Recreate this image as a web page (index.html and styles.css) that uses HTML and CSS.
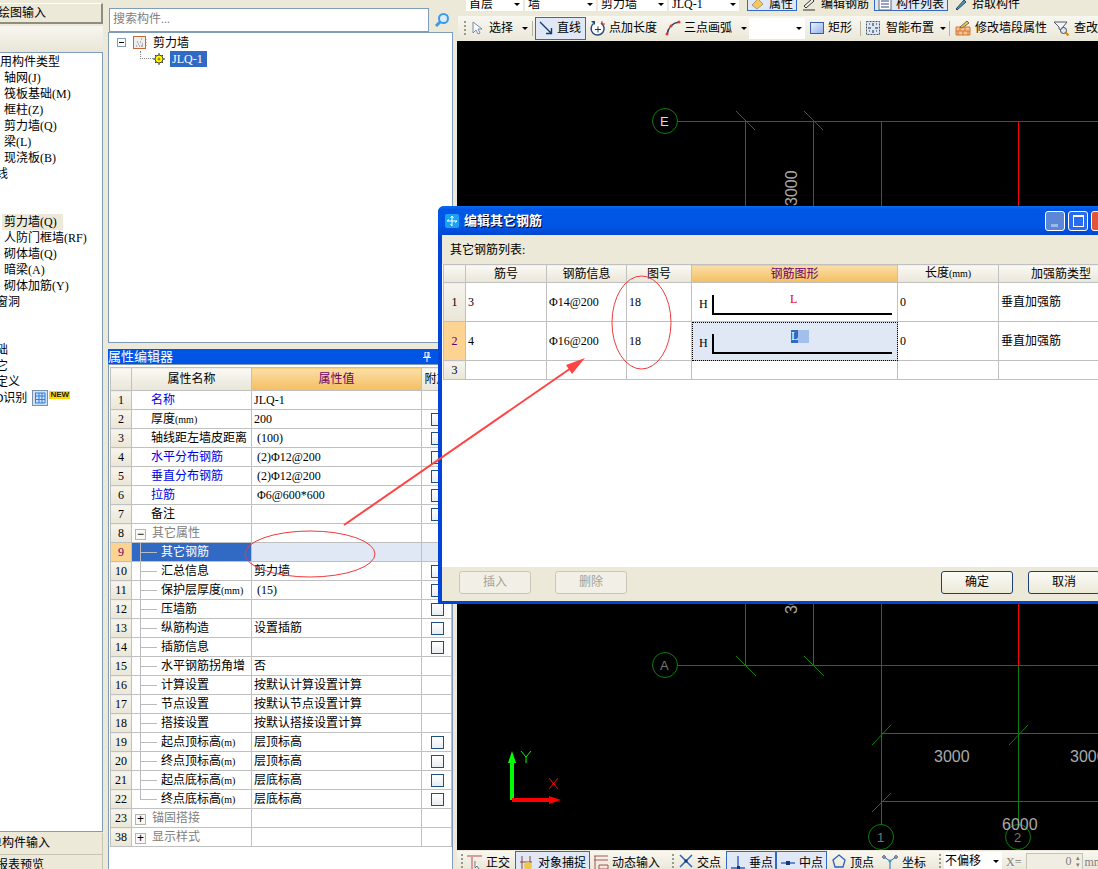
FILE: index.html
```html
<!DOCTYPE html>
<html lang="zh">
<head>
<meta charset="utf-8">
<title>编辑其它钢筋</title>
<link rel="stylesheet" href="styles.css">
</head>
<body>
<div class="app">
  <aside class="left">
    <div class="navbtn first"><span class="cut2">绘图输入</span></div>
    <div class="navblank"></div>
    <div class="navlist">
      <div class="li cut12">常用构件类型</div>
      <div class="li ind">轴网(J)</div>
      <div class="li ind">筏板基础(M)</div>
      <div class="li ind">框柱(Z)</div>
      <div class="li ind">剪力墙(Q)</div>
      <div class="li ind">梁(L)</div>
      <div class="li ind">现浇板(B)</div>
      <div class="li cut16">轴线</div>
      <div class="li"></div>
      <div class="li"></div>
      <div class="li ind"><span class="sel">剪力墙(Q)</span></div>
      <div class="li ind">人防门框墙(RF)</div>
      <div class="li ind">砌体墙(Q)</div>
      <div class="li ind">暗梁(A)</div>
      <div class="li ind">砌体加筋(Y)</div>
      <div class="li cut16">门窗洞</div>
      <div class="li"></div>
      <div class="li"></div>
      <div class="li cut16">基础</div>
      <div class="li cut16">其它</div>
      <div class="li cut16">自定义</div>
      <div class="li idrow">CAD识别
        <svg class="ic16 idicon" viewBox="0 0 16 16"><rect x="0.500" y="0.500" width="15" height="15" fill="#cfe2fa" stroke="#7f8fa8"/><path d="M3.500 3v10M7 3v10M10 3v10M13 3v10M3 3h10M3 6h10M3 9.500h10M3 13h10" stroke="#2f7fe0" fill="none"/></svg>
        <span class="newtag">NEW</span>
      </div>
    </div>
    <div class="navbtn bottom"><span class="cut10">单构件输入</span></div>
    <div class="navbtn last"><span class="cut4">报表预览</span></div>
  </aside>

  <section class="mid">
    <div class="searchrow">
      <div class="search">搜索构件...</div>
      <svg class="searchicon" viewBox="0 0 16 16"><circle cx="9.500" cy="6.500" r="4.500" fill="#d9ecfb" stroke="#3b9be6" stroke-width="2"/><path d="M6 10l-4 4" stroke="#3b9be6" stroke-width="3"/></svg>
    </div>
    <div class="tree">
      <div class="tnode">
        <span class="minus"></span>
        <svg class="ic14 tfolder" viewBox="0 0 14 14"><rect x="0.500" y="0.500" width="12" height="12" fill="#eee" stroke="#c5673a"/><path d="M3 10h1M5 8h1M7 6h1M4 6h1M8 10h2M6 10h1M9 8h1M8 3h1" stroke="#777"/><path d="M13 3v1M13 6v1M13 9v1" stroke="#e07020"/></svg>
        <span>剪力墙</span>
      </div>
      <div class="tnode child">
        <span class="dots"></span>
        <svg class="ic12" viewBox="0 0 12 12"><circle cx="6" cy="6" r="4" fill="#ff0" stroke="#444"/><circle cx="6" cy="6" r="1.500" fill="#a80"/><path d="M6 0v2M6 10v2M0 6h2M10 6h2M2 2l1 1M9 9l1 1M2 10l1-1M9 3l1-1" stroke="#333"/></svg>
        <span class="tsel">JLQ-1</span>
      </div>
    </div>
    <div class="ptitle"><span>属性编辑器</span><svg class="pin" viewBox="0 0 8 10"><path d="M2 0h4v5H2zM5 0v5M0 5.500h8M4 6v4" stroke="#fff" fill="none"/></svg></div>
    <div class="pbody">
      <table class="grid pgrid">
        <colgroup><col class="c1"><col class="c2"><col class="c3"><col class="c4"></colgroup>
        <tr class="head"><th></th><th>属性名称</th><th class="hot">属性值</th><th>附加</th></tr>
        <tr><td class="n">1</td><td class="nm blue">名称</td><td class="v">JLQ-1</td><td></td></tr>
        <tr><td class="n">2</td><td class="nm">厚度<span class="u">(mm)</span></td><td class="v">200</td><td class="k"><i class="cb"></i></td></tr>
        <tr><td class="n">3</td><td class="nm">轴线距左墙皮距离</td><td class="v p">(100)</td><td class="k"><i class="cb"></i></td></tr>
        <tr><td class="n">4</td><td class="nm blue">水平分布钢筋</td><td class="v p">(2)Φ12@200</td><td class="k"><i class="cb"></i></td></tr>
        <tr><td class="n">5</td><td class="nm blue">垂直分布钢筋</td><td class="v p">(2)Φ12@200</td><td class="k"><i class="cb"></i></td></tr>
        <tr><td class="n">6</td><td class="nm blue">拉筋</td><td class="v p">Φ6@600*600</td><td class="k"><i class="cb"></i></td></tr>
        <tr><td class="n">7</td><td class="nm">备注</td><td class="v"></td><td class="k"><i class="cb"></i></td></tr>
        <tr><td class="n">8</td><td class="gp"><span class="box">−</span>其它属性</td><td></td><td></td></tr>
        <tr class="cur"><td class="n">9</td><td class="sub">其它钢筋</td><td></td><td></td></tr>
        <tr><td class="n">10</td><td class="sub">汇总信息</td><td class="v">剪力墙</td><td class="k"><i class="cb"></i></td></tr>
        <tr><td class="n">11</td><td class="sub">保护层厚度<span class="u">(mm)</span></td><td class="v p">(15)</td><td class="k"><i class="cb"></i></td></tr>
        <tr><td class="n">12</td><td class="sub">压墙筋</td><td class="v"></td><td class="k"><i class="cb"></i></td></tr>
        <tr><td class="n">13</td><td class="sub">纵筋构造</td><td class="v">设置插筋</td><td class="k"><i class="cb"></i></td></tr>
        <tr><td class="n">14</td><td class="sub">插筋信息</td><td class="v"></td><td class="k"><i class="cb"></i></td></tr>
        <tr><td class="n">15</td><td class="sub">水平钢筋拐角增</td><td class="v">否</td><td></td></tr>
        <tr><td class="n">16</td><td class="sub">计算设置</td><td class="v">按默认计算设置计算</td><td></td></tr>
        <tr><td class="n">17</td><td class="sub">节点设置</td><td class="v">按默认节点设置计算</td><td></td></tr>
        <tr><td class="n">18</td><td class="sub">搭接设置</td><td class="v">按默认搭接设置计算</td><td></td></tr>
        <tr><td class="n">19</td><td class="sub">起点顶标高<span class="u">(m)</span></td><td class="v">层顶标高</td><td class="k"><i class="cb"></i></td></tr>
        <tr><td class="n">20</td><td class="sub">终点顶标高<span class="u">(m)</span></td><td class="v">层顶标高</td><td class="k"><i class="cb"></i></td></tr>
        <tr><td class="n">21</td><td class="sub">起点底标高<span class="u">(m)</span></td><td class="v">层底标高</td><td class="k"><i class="cb"></i></td></tr>
        <tr><td class="n">22</td><td class="sub end">终点底标高<span class="u">(m)</span></td><td class="v">层底标高</td><td class="k"><i class="cb"></i></td></tr>
        <tr><td class="n">23</td><td class="gp"><span class="box">+</span>锚固搭接</td><td></td><td></td></tr>
        <tr><td class="n">38</td><td class="gp"><span class="box">+</span>显示样式</td><td></td><td></td></tr>
      </table>
    </div>
  </section>

  <section class="right">
    <div class="tb1">
      <span class="combo w57"><span>首层</span><b class="dn"></b></span>
      <span class="combo w71"><span>墙</span><b class="dn"></b></span>
      <span class="combo w69"><span>剪力墙</span><b class="dn"></b></span>
      <span class="combo w70"><span>JLQ-1</span><b class="dn"></b></span>
      <span class="t1btn on w50 firstb">
        <svg class="ic14" viewBox="0 0 14 14"><path d="M1 8l6-6 5 5-6 5z" fill="#f5c95a" stroke="#a97"/></svg>属性</span>
      <span class="t1btn w65">
        <svg class="ic14" viewBox="0 0 14 14"><path d="M1 9l8-7 2 2-8 7zM0 13h12" stroke="#333" fill="#eee"/></svg>编辑钢筋</span>
      <span class="t1btn on w74">
        <svg class="ic14" viewBox="0 0 14 14"><path d="M1 1h12v12H1z" fill="#fff" stroke="#666"/><path d="M3 4h8M3 7h8M3 10h8" stroke="#348"/></svg>构件列表</span>
      <span class="t1btn w65">
        <svg class="ic14" viewBox="0 0 14 14"><path d="M2 12l8-9 2 2-9 8z" fill="#59b" stroke="#246"/></svg>拾取构件</span>
    </div>
    <div class="tb2">
      <i class="grip"></i>
      <svg class="ic14 m4" viewBox="0 0 14 14"><path d="M3 1v11l3-3 2 4 2-1-2-4h4z" fill="#fff" stroke="#7a86a8"/></svg>
      <span class="m5">选择</span><b class="dn m9"></b><i class="sep m4"></i>
      <span class="tool on m2"><svg class="ic14" viewBox="0 0 14 14"><path d="M1 1l11 11M7 12.500h5.500V7" stroke="#123a78" stroke-width="1.400" fill="none"/></svg>直线</span>
      <svg class="ic16 m4" viewBox="0 0 16 16"><path d="M3.500 3.500A6.500 6.500 0 1 0 11 3" fill="#fff" stroke="#234a80" stroke-width="1.500"/><path d="M5 9.500h6M8 6.500v6" stroke="#234"/><path d="M1 1l4 0 0 4z" fill="#234a80"/><path d="M12 1v3h3" stroke="#c33" fill="none"/></svg>
      <span class="m3">点加长度</span>
      <svg class="ic16 m8" viewBox="0 0 16 16"><path d="M2 15C3 8 7 3 14 2" fill="none" stroke="#345" stroke-width="1.500"/><circle cx="2" cy="14" r="1.500" fill="#e33"/><circle cx="6" cy="6" r="1.500" fill="#e33"/><circle cx="14" cy="2" r="1.500" fill="#e33"/></svg>
      <span class="m3">三点画弧</span><b class="dn m9"></b>
      <span class="blank m2"><b class="dn"></b></span>
      <svg class="ic14 m5" viewBox="0 0 14 14"><defs><linearGradient id="rc" x1="0" y1="0" x2="1" y2="1"><stop offset="0" stop-color="#eef4fd"/><stop offset="1" stop-color="#8fb0ea"/></linearGradient></defs><rect x="0.500" y="1.500" width="13" height="11" fill="url(#rc)" stroke="#3a5ea8"/></svg>
      <span class="m4">矩形</span><i class="sep m8"></i>
      <svg class="ic14 m5" viewBox="0 0 14 14"><rect x="0.500" y="0.500" width="13" height="13" fill="#dde6f5" stroke="#456" stroke-dasharray="2 1"/><path d="M7 2v3M7 9v3M2 7h3M9 7h3M3 3h1M10 3h1M3 10h1M10 10h1" stroke="#123"/></svg>
      <span class="m6">智能布置</span><b class="dn m6"></b><i class="sep m3"></i>
      <svg class="ic16 m5" viewBox="0 0 16 16"><path d="M1 7h14v8H1z" fill="#f3c58c" stroke="#d9703a"/><path d="M1 11h14M5 7v4M10 7v4M3 11v4M8 11v4M13 11v4" stroke="#d9703a"/><path d="M5 7l7-6 2 2-7 5z" fill="#ecc94b" stroke="#765"/></svg>
      <span class="m4">修改墙段属性</span>
      <svg class="ic16 m6" viewBox="0 0 16 16"><path d="M1 2h13l-4 5v4L6 9V7z" fill="#f3f5fa" stroke="#556"/><circle cx="10.500" cy="10.500" r="3" fill="#dfe8f2" stroke="#445"/><path d="M12.500 12.500l3 3" stroke="#c80" stroke-width="2"/></svg>
      <span class="m5 clip">查改</span>
    </div>
    <div class="canvas">
      <svg class="cad" viewBox="457 41 641 809">
        <g class="gr">
          <circle cx="665" cy="121" r="12.500"/><circle cx="665" cy="665" r="12.500"/>
          <circle cx="881" cy="837" r="12.500"/><circle cx="1018" cy="837" r="12.500"/>
          <path d="M677.500 121.500H881M677.500 665.500H881M745.500 121V665M813.500 121V665M881.500 665V825M1018.500 665V825M881 733.500H1098M881 801.500H1098"/>
          <path d="M736 111L755 130M804 111L823 130M736 656L756 676M804 656L824 676M872 745L891 725M1009 745L1028 725M872 812L891 793"/>
        </g>
        <path class="rd" d="M881 121.500H1098M881 665.500H1098M881.500 121V665M1018.500 121V665"/>
        <text class="lab big" x="660" y="126">E</text>
        <text class="lab dim" x="660" y="670">A</text>
        <text class="lab dim" x="877" y="842">1</text>
        <text class="lab dim" x="1014" y="842">2</text>
        <text class="lab num" transform="translate(797 206) rotate(-90)">3000</text>
        <text class="lab num" transform="translate(797 614) rotate(-90)">3000</text>
        <text class="lab num" x="934" y="762">3000</text>
        <text class="lab num" x="1070" y="762">3000</text>
        <text class="lab num" x="1002" y="830">6000</text>
        <path class="axg" d="M512 800V757"/><path class="axgf" d="M512 751l-4 12h8z"/>
        <path class="axr" d="M512 800H552"/><path class="axrf" d="M561 800l-12-4v8z"/>
        <path class="thing" stroke="#0f0" d="M521 751l5 6 5-6M526 757v6"/>
        <path class="thing" stroke="#f00" d="M549 778l9 11M558 778l-9 11"/>
      </svg>
    </div>
    <div class="tb3">
      <i class="grip"></i>
      <svg class="ic16 m4" viewBox="0 0 16 16"><path d="M0 2h15M5 2v13" stroke="#dd9a9a" stroke-width="2" fill="none"/><path d="M8 7v7l2-2 2 3" stroke="#678" fill="#fff"/></svg>
      <span class="m3">正交</span>
      <span class="tool3 on m5 w75"><svg class="ic16" viewBox="0 0 16 16"><path d="M3 1v14M11 1v8M1 7h12" stroke="#844"/><circle cx="9" cy="11" r="4" fill="#ecc94b"/></svg>对象捕捉</span>
      <svg class="ic16 m3" viewBox="0 0 16 16"><path d="M1 2h14M1 6h14M2 2v13M6 11h9v4H6z" stroke="#a55" fill="none"/></svg>
      <span class="m3">动态输入</span>
      <i class="grip m12"></i>
      <svg class="ic14 m5" viewBox="0 0 14 14"><path d="M1 1l12 12M13 1L1 13" stroke="#2a62c0" stroke-width="1.500"/><rect x="5.500" y="5.500" width="3" height="3" fill="#123a78"/></svg>
      <span class="m4">交点</span>
      <span class="tool3 on m5 w50"><svg class="ic16" viewBox="0 0 16 16"><path d="M8 1v12M1 13h14" stroke="#2a62c0" stroke-width="1.400"/><rect x="7" y="11" width="3" height="3" fill="#123a78"/></svg>垂点</span>
      <span class="tool3 on w51"><svg class="ic16" viewBox="0 0 16 16"><path d="M1 8h14" stroke="#2a62c0" stroke-width="1.400"/><rect x="6" y="6" width="4" height="4" fill="#123a78"/></svg>中点</span>
      <svg class="ic14 m5" viewBox="0 0 14 14"><path d="M7 1l6 5-2 7H3L1 6z" fill="none" stroke="#2a62c0" stroke-width="1.300"/></svg>
      <span class="m4">顶点</span>
      <svg class="ic16 m8" viewBox="0 0 16 16"><path d="M8 7v8M2 3l6 4 6-4" stroke="#2a62c0" fill="none"/><circle cx="8" cy="7" r="1.500" fill="#2aa"/><circle cx="2" cy="3" r="1.300" fill="#fff" stroke="#345"/><circle cx="14" cy="3" r="1.300" fill="#fff" stroke="#345"/></svg>
      <span class="m4">坐标</span>
      <i class="grip m13"></i>
      <span class="blank3 m3">不偏移<b class="dn"></b></span>
      <span class="gray m4">X=</span>
      <span class="spin m4">0<em class="arrows">▴<br>▾</em></span>
      <span class="gray m2">mm</span>
    </div>
  </section>
</div>

<div class="dialog">
  <div class="dtitle">
    <svg class="appicon" viewBox="0 0 14 14"><rect width="14" height="14" rx="2" fill="#19a2f5"/><path d="M7 2v10M2 7h10M7 2L5.500 4M7 2l1.500 2M2 7l2-1.500M12 7l-2 1.500M7 12l-1.500-2" stroke="#fff" fill="none"/></svg>
    <span class="dcap">编辑其它钢筋</span>
    <span class="wbtn minw"><i class="minb"></i></span>
    <span class="wbtn"><i class="maxb"></i></span>
    <span class="wbtn close"></span>
  </div>
  <div class="dbody">
    <div class="dlabel">其它钢筋列表:</div>
    <div class="dwhite">
      <table class="grid dgrid">
        <colgroup><col class="d1"><col class="d2"><col class="d3"><col class="d4"><col class="d5"><col class="d6"><col class="d7"></colgroup>
        <tr class="dhead"><th></th><th>筋号</th><th>钢筋信息</th><th>图号</th><th class="hot">钢筋图形</th><th>长度<span class="u">(mm)</span></th><th>加强筋类型</th></tr>
        <tr class="tall"><td class="n">1</td><td class="pd">3</td><td class="pd">Φ14@200</td><td class="pd">18</td>
          <td><div class="shape"><span class="hh">H</span><i class="bar"></i><span class="ll">L</span></div></td><td class="pd">0</td><td class="pd">垂直加强筋</td></tr>
        <tr class="tall cur2"><td class="n">2</td><td class="pd">4</td><td class="pd">Φ16@200</td><td class="pd">18</td>
          <td class="focus"><div class="shape"><span class="hh">H</span><i class="bar"></i><span class="mark"><span class="ll2">L</span></span></div></td><td class="pd">0</td><td class="pd">垂直加强筋</td></tr>
        <tr><td class="n">3</td><td></td><td></td><td></td><td></td><td></td><td></td></tr>
      </table>
    </div>
    <div class="dfoot">
      <span class="dbtn off">插入</span>
      <span class="dbtn off m24">删除</span>
      <span class="dbtn pushr">确定</span>
      <span class="dbtn m15">取消</span>
    </div>
  </div>
</div>

<svg class="notes" viewBox="0 0 1098 869">
  <ellipse cx="310" cy="554" rx="65" ry="23"/>
  <ellipse cx="641.500" cy="322.500" rx="29.500" ry="46.500"/>
  <path class="arrowline" d="M344 525L574 366"/>
  <path class="arrowhead" d="M585 358L566 365l6 9z"/>
</svg>
</body>
</html>
```
FILE: styles.css
```css
* { box-sizing: border-box; }
html, body { margin: 0; padding: 0; width: 1098px; height: 869px; overflow: hidden; }
body {
  position: relative;
  background: #ece9d8;
  color: #000;
  font: 12px/16px "Liberation Serif", "Noto Sans CJK SC", serif;
}
.app { display: grid; grid-template-columns: 103px 345px 641px; column-gap: 0; height: 869px; }

/* left navigation */
.left { display: flex; flex-direction: column; width: 103px; height: 869px; padding-top: 3px; overflow: hidden; }
.navbtn { height: 21px; flex: none; background: #ece9d8; border-right: 2px solid #8f8d80; border-bottom: 2px solid #8f8d80; border-top: 1px solid #fff; line-height: 19px; white-space: nowrap; overflow: hidden; }
.navbtn.bottom { height: 22px; border: 0; border-right: 1px solid #c7c4b4; border-bottom: 1px solid #c7c4b4; margin-top: 1px; line-height: 21px; }
.navbtn.last { height: 14px; border: 0; border-right: 1px solid #c7c4b4; line-height: 20px; }
.navblank { height: 26px; margin-top: 2px; flex: none; background: linear-gradient(#f8f6ef, #e9e6d8); }
.navlist { flex: 1; background: #fff; border: 1px solid #7f9db9; border-left: 0; padding-top: 1px; overflow: hidden; }
.li { height: 16px; white-space: nowrap; }
.ind { padding-left: 4px; }
.cut2, .cut12, .cut10, .cut16, .cut4 { display: block; }
.cut2 { margin-left: -2px; }
.cut12 { margin-left: -12px; }
.cut10 { margin-left: -10px; }
.cut16 { margin-left: -16px; }
.cut4 { margin-left: -4px; }
.sel { display: inline-block; background: #ece9d8; width: 61px; margin-left: -2px; padding-left: 2px; }
.idrow { display: flex; align-items: center; margin-left: -22px; }
.idicon { margin-left: 5px; }
.newtag { background: #ffd800; color: #222; font: bold 8px/8px "Liberation Sans", sans-serif; width: 21px; text-align: center; margin-left: 1px; margin-top: -6px; }

/* middle panel */
.mid { display: flex; flex-direction: column; width: 349px; height: 869px; margin-left: 5px; padding-top: 7px; overflow: hidden; }
.mid > * { width: 345px; }
.searchrow { display: flex; align-items: center; height: 25px; flex: none; }
.search { width: 320px; height: 24px; margin-left: 1px; background: #fff; border: 1px solid #7f9db9; color: #808080; line-height: 20px; padding-left: 3px; }
.searchicon { width: 16px; height: 16px; margin-left: 5px; }
.tree { height: 311px; flex: none; background: #fff; border: 1px solid #7f9db9; padding: 1px 0 0 8px; }
.tnode { display: flex; align-items: center; height: 17px; }
.minus { width: 9px; height: 9px; border: 1px solid #7f9db9; position: relative; background: #fff; }
.minus::after { content: ""; position: absolute; left: 1px; top: 3px; width: 5px; height: 1px; background: #000; }
.tfolder { margin: 0 6px 0 7px; }
.tnode.child { margin-left: 23px; height: 16px; }
.dots { width: 13px; height: 8px; margin-top: -8px; border-left: 1px dotted #888; border-bottom: 1px dotted #888; }
.tsel { background: #316ac5; color: #fff; padding: 0 2px; height: 16px; margin-left: 5px; width: 37px; white-space: nowrap; }
.ptitle { display: flex; justify-content: space-between; align-items: center; margin-top: 6px; height: 15px; flex: none; background: #0055e5; color: #fff; font-size: 13px; line-height: 15px; }
.pin { width: 8px; height: 10px; margin-right: 22px; }
.pbody { flex: 1; background: #fff; border-left: 1px solid #7f9db9; border-right: 1px solid #7f9db9; border-top: 1px solid #7f9db9; padding: 2px 0 0 1px; }

/* grids */
.grid { border-collapse: collapse; table-layout: fixed; background: #fff; }
.grid th, .grid td { border: 1px solid #c0c0c0; padding: 0; font-weight: normal; white-space: nowrap; overflow: hidden; height: 19px; }
.grid th { background: linear-gradient(#faf9f4, #e9e6d8); text-align: center; }
.grid th.hot { background: linear-gradient(#fbdfa8, #f3be60); color: #6a006a; }
.pgrid { width: 341px; }
.c1 { width: 21px; } .c2 { width: 120px; } .c3 { width: 170px; } .c4 { width: 30px; }
.pgrid tr.head th { height: 23px; }
.u { font-size: 10px; }
.n { background: linear-gradient(#f6f4ec, #e9e6d8); text-align: center; font-family: "Liberation Serif", serif; }
.nm { padding-left: 19px !important; }
.blue { color: #0000e6; }
.v { padding-left: 2px !important; }
.v.p { padding-left: 5px !important; }
.k { text-align: center; }
.cb { display: block; width: 13px; height: 13px; margin: 0 auto 0 9px; background: linear-gradient(#fff, #e8edf0); border: 1px solid #1c5180; }
.gp { color: #808080; padding-left: 3px !important; }
.box { display: inline-block; width: 11px; height: 11px; margin-right: 6px; border: 1px solid #b5b5a8; background: #f8f8f4; color: #000; text-align: center; line-height: 9px; vertical-align: -1px; font-family: "Liberation Sans", sans-serif; }
.sub { position: relative; padding-left: 29px !important; }
.sub::before { content: ""; position: absolute; left: 8px; top: 0; bottom: 0; width: 1px; background: #bbb; }
.sub::after { content: ""; position: absolute; left: 8px; top: 9px; width: 17px; height: 1px; background: #bbb; }
.sub.end::before { bottom: 9px; }
.cur td { background: #e0e8f5; }
.cur td.n { background: #fdd392; color: #6a006a; }
.cur td.sub { background: #316ac5; color: #fff; }

/* right */
.right { display: flex; flex-direction: column; width: 641px; height: 869px; margin-left: 9px; overflow: hidden; }
.tb1 { height: 14px; flex: none; display: flex; margin-top: -3px; padding-left: 9px; gap: 2px; overflow: hidden; align-items: flex-start; white-space: nowrap; }
.combo { display: flex; justify-content: space-between; align-items: center; height: 14px; background: #fff; padding: 0 3px; flex: none; }
.w57 { width: 57px; } .w71 { width: 71px; } .w69 { width: 69px; } .w70 { width: 70px; }
.t1btn { display: flex; align-items: center; gap: 4px; height: 14px; margin-left: 4px; flex: none; }
.t1btn.on { background: #e0e8f5; border: 1px solid #316ac5; padding-left: 3px; }
.firstb { margin-left: 6px; }
.w50 { width: 50px; } .w65 { width: 65px; } .w74 { width: 74px; } .w75 { width: 75px; } .w51 { width: 51px; }
.dn { display: inline-block; width: 0; height: 0; border: 3px solid transparent; border-top: 3px solid #000; border-bottom: 0; flex: none; }
.tb2 { display: flex; align-items: center; height: 24px; margin-top: 5px; flex: none; padding-left: 6px; background: linear-gradient(#f8f7f0, #ebe8da); white-space: nowrap; overflow: hidden; margin-left: 1px; }
.grip { display: block; flex: none; width: 2px; height: 14px; background: repeating-linear-gradient(#9a9a8c 0 2px, transparent 2px 4px); }
.sep { display: block; flex: none; width: 1px; height: 15px; background: #b5b3a4; }
.ic14 { width: 14px; height: 14px; flex: none; display: block; }
.ic16 { width: 16px; height: 16px; flex: none; display: block; }
.ic12 { width: 12px; height: 12px; flex: none; display: block; }
.m2 { margin-left: 2px; } .m3 { margin-left: 3px; } .m4 { margin-left: 4px; } .m5 { margin-left: 5px; } .m6 { margin-left: 6px; } .m8 { margin-left: 8px; } .m9 { margin-left: 9px; } .m12 { margin-left: 12px; } .m13 { margin-left: 13px; } .m15 { margin-left: 15px; } .m24 { margin-left: 24px; }
.tool { display: flex; align-items: center; gap: 4px; width: 51px; height: 23px; padding-left: 3px; background: #e0e8f5; border: 1px solid #316ac5; flex: none; }
.blank { display: flex; justify-content: flex-end; align-items: center; width: 56px; height: 21px; padding-right: 3px; background: #fff; flex: none; }
.clip { flex: none; }
.canvas { height: 809px; flex: none; margin-top: 1px; background: #000; }
.cad { display: block; width: 641px; height: 809px; }
.cad circle, .cad .gr path { fill: none; stroke: #0a800a; stroke-width: 1; }
.rd { fill: none; stroke: #f00; stroke-width: 1; }
.lab { font-family: "Liberation Sans", sans-serif; fill: #b4b4b4; font-size: 13px; }
.lab.big { fill: #ddd; }
.lab.dim { fill: #777; }
.lab.num { font-size: 16px; fill: #aaa; }
.axg { stroke: #0f0; stroke-width: 4; fill: none; }
.axgf { fill: #0f0; }
.axr { stroke: #f00; stroke-width: 4; fill: none; }
.axrf { fill: #f00; }
.thing { fill: none; stroke-width: 1; }
.tb3 { display: flex; align-items: flex-start; height: 18px; flex: none; margin-top: 1px; padding-left: 4px; white-space: nowrap; overflow: hidden; background: linear-gradient(#f8f7f0, #ebe8da); }
.tb3 > span { line-height: 24px; }
.tb3 > svg { margin-top: 3px; }
.tb3 > .grip { margin-top: 3px; }
.tool3 { display: flex; align-items: center; gap: 3px; height: 24px; padding-left: 3px; background: #e0e8f5; border: 1px solid #316ac5; flex: none; }
.tb3 > .blank3 { display: flex; justify-content: space-between; align-items: center; width: 58px; height: 19px; line-height: 19px; margin-top: 1px; padding: 0 3px 0 1px; background: #fff; flex: none; }
.tb3 > .gray { color: #808080; flex: none; line-height: 22px; }
.tb3 > .spin { display: flex; justify-content: flex-end; align-items: center; width: 57px; height: 17px; line-height: 15px; margin-top: 2px; color: #808080; background: #f0eee2; border: 1px solid #c5c3b3; flex: none; gap: 4px; padding-right: 2px; }
.arrows { font-style: normal; font-size: 7px; line-height: 7px; text-align: center; }

/* dialog */
.dialog { position: absolute; left: 438px; top: 206px; width: 673px; height: 398px; display: flex; flex-direction: column; background: #0044d8; border-radius: 6px 6px 0 0; padding: 0 4px 3px; }
.dtitle { display: flex; align-items: center; height: 29px; flex: none; margin: 0 -4px; padding-left: 7px; background: linear-gradient(#0a6cf0 0, #0058e6 12%, #0055e5 70%, #0048d0 100%); border-radius: 6px 6px 0 0; color: #fff; }
.appicon { width: 14px; height: 14px; flex: none; }
.dcap { margin-left: 5px; font-size: 13px; font-weight: bold; white-space: nowrap; text-shadow: 1px 1px 0 #003; }
.wbtn { position: relative; width: 20px; height: 20px; margin-left: 3px; flex: none; border: 1px solid #fff; border-radius: 3px; background: #2a6cf0; }
.wbtn.minw { margin-left: auto; background: #5c86d6; }
.minb { position: absolute; left: 5px; top: 12px; width: 7px; height: 3px; background: #9ab8ea; }
.maxb { position: absolute; left: 4px; top: 3px; width: 11px; height: 12px; border: 1px solid #fff; border-top-width: 2px; }
.wbtn.close { background: #e0553a; }
.dbody { flex: 1; display: flex; flex-direction: column; background: #ece9d8; }
.dlabel { height: 29px; flex: none; line-height: 30px; padding-left: 8px; }
.dwhite { flex: 1; background: #fff; padding-left: 1px; }
.dgrid { width: 680px; }
.d1 { width: 22px; } .d2 { width: 81px; } .d3 { width: 80px; } .d4 { width: 65px; } .d5 { width: 206px; } .d6 { width: 101px; } .d7 { width: 125px; }
.dgrid .dhead th { height: 18px; }
.tall td { height: 39px; }
.pd { padding-left: 2px !important; }
.cur2 td { background: #fff; }
.cur2 td.n { background: #fdd392; color: #6a006a; }
.focus { background: #e0e8f5 !important; outline: 1px dotted #000; outline-offset: -1px; }
.shape { position: relative; height: 38px; }
.hh { position: absolute; left: 7px; top: 13px; }
.bar { position: absolute; left: 20px; top: 12px; width: 180px; height: 20px; border-left: 2px solid #000; border-bottom: 2px solid #000; }
.ll { position: absolute; left: 98px; top: 8px; color: #e00; }
.mark { position: absolute; left: 99px; top: 8px; width: 18px; height: 13px; background: #a3bfec; }
.ll2 { display: block; width: 7px; height: 13px; background: #316ac5; color: #fff; line-height: 13px; text-align: center; }
.dfoot { display: flex; align-items: center; height: 34px; flex: none; padding: 0 0 3px 17px; }
.dbtn { display: block; width: 72px; height: 23px; flex: none; text-align: center; line-height: 21px; background: linear-gradient(#fbfbf7, #ece9d8); border: 1px solid #1c3f7c; border-radius: 3px; }
.dbtn.off { color: #a5a294; border-color: #c9c7b8; background: #f2f0e6; }
.pushr { margin-left: 314px; }

/* annotations */
.notes { position: absolute; left: 0; top: 0; width: 1098px; height: 869px; pointer-events: none; }
.notes ellipse { fill: none; stroke: #f03a3a; stroke-width: 1; }
.arrowline { fill: none; stroke: #f44; stroke-width: 2; }
.arrowhead { fill: #f44; }
```
